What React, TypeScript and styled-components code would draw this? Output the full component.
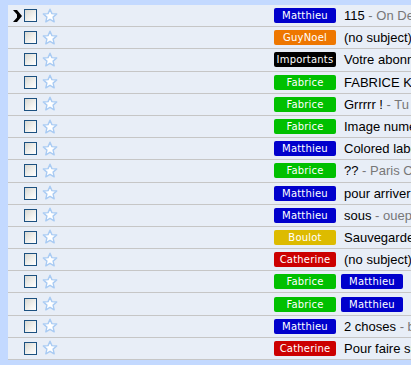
import React from "react";
import styled, { createGlobalStyle } from "styled-components";

const Global = createGlobalStyle`
  html, body { margin: 0; padding: 0; background: #c3d9ff; }
  body { width: 411px; height: 365px; overflow: hidden; }
`;

const Page = styled.div`
  padding: 5px 0 0 8px;
  width: 411px;
  height: 365px;
  box-sizing: border-box;
  overflow: hidden;
`;

const List = styled.div`
  display: flex;
  flex-direction: column;
  width: 700px;
`;

const Row = styled.div`
  display: flex;
  align-items: center;
  height: 22.1875px;
  box-sizing: border-box;
  background: #e8eef7;
  border-bottom: 1px solid #c6c6c6;
  font-family: "Liberation Sans", Arial, sans-serif;
  font-size: 13px;
  white-space: nowrap;
`;

const ArrowCell = styled.div`
  width: 15px;
  margin-right: 1px;
  display: flex;
  justify-content: flex-end;
  height: 100%;
  align-items: center;
`;

const Check = styled.div`
  width: 13px;
  height: 13px;
  box-sizing: border-box;
  border: 1px solid #1c5180;
  background: linear-gradient(135deg, #d8d8d2 0%, #f2f2ef 60%, #ffffff 100%);
  flex: none;
`;

const StarCell = styled.div`
  margin-left: 5px;
  width: 16px;
  height: 16px;
  display: flex;
  align-items: center;
  justify-content: center;
  flex: none;
`;

const Sender = styled.div`
  width: 216px;
  flex: none;
`;

const Labels = styled.div`
  display: flex;
  gap: 5px;
  margin-right: 8px;
  flex: none;
`;

const Label = styled.span<{ $bg: string }>`
  display: inline-flex;
  align-items: center;
  justify-content: center;
  width: 62px;
  height: 15px;
  border-radius: 2px;
  background: ${(p) => p.$bg};
  color: #fff;
  font-family: "DejaVu Sans", Verdana, sans-serif;
  font-size: 10px;
  letter-spacing: 0.2px;
  line-height: 15px;
`;

const Text = styled.span`
  color: #000;
  white-space: pre;
`;

const Snippet = styled.span`
  color: #777777;
`;

const colors: Record<string, string> = {
  Matthieu: "#0000cc",
  GuyNoel: "#ee7700",
  Importants: "#000000",
  Fabrice: "#00c000",
  Boulot: "#ddbb00",
  Catherine: "#cc0000",
};

type Item = { labels: string[]; subject?: string; snippet?: string };

const items: Item[] = [
  { labels: ["Matthieu"], subject: "115", snippet: "On Dec 4, 2007" },
  { labels: ["GuyNoel"], subject: "(no subject)" },
  { labels: ["Importants"], subject: "Votre abonnement" },
  { labels: ["Fabrice"], subject: "FABRICE KOPP" },
  { labels: ["Fabrice"], subject: "Grrrrr !", snippet: "Tu vois" },
  { labels: ["Fabrice"], subject: "Image numérique" },
  { labels: ["Matthieu"], subject: "Colored labels" },
  { labels: ["Fabrice"], subject: "??", snippet: "Paris Centre" },
  { labels: ["Matthieu"], subject: "pour arriver" },
  { labels: ["Matthieu"], subject: "sous", snippet: "ouep ouep" },
  { labels: ["Boulot"], subject: "Sauvegarde" },
  { labels: ["Catherine"], subject: "(no subject)" },
  { labels: ["Fabrice", "Matthieu"] },
  { labels: ["Fabrice", "Matthieu"] },
  { labels: ["Matthieu"], subject: "2 choses", snippet: "bon" },
  { labels: ["Catherine"], subject: "Pour faire suite" },
];

const Arrow = () => (
  <svg width="11" height="12" viewBox="0 0 11 12">
    <path d="M1 0 H5 L10 6 L5 12 H1 L5 7.5 V4.5 Z" fill="#000" />
  </svg>
);

const Star = () => (
  <svg width="16" height="16" viewBox="0 0 16 16">
    <path
      d="M8 1.2 L9.9 5.6 L14.7 6 L11.1 9.1 L12.2 13.8 L8 11.3 L3.8 13.8 L4.9 9.1 L1.3 6 L6.1 5.6 Z"
      fill="#ffffff"
      stroke="#a9cbf3"
      strokeWidth="1.4"
      strokeLinejoin="round"
    />
  </svg>
);

export default function App() {
  return (
    <>
      <Global />
      <Page>
        <List>
          {items.map((it, i) => (
            <Row key={i}>
              <ArrowCell>{i === 0 ? <Arrow /> : null}</ArrowCell>
              <Check />
              <StarCell>
                <Star />
              </StarCell>
              <Sender />
              <Labels>
                {it.labels.map((l, j) => (
                  <Label key={j} $bg={colors[l]}>
                    {l}
                  </Label>
                ))}
              </Labels>
              {it.subject ? (
                <Text>
                  {it.subject}
                  {it.snippet ? <Snippet>{" - " + it.snippet}</Snippet> : null}
                </Text>
              ) : null}
            </Row>
          ))}
        </List>
      </Page>
    </>
  );
}
